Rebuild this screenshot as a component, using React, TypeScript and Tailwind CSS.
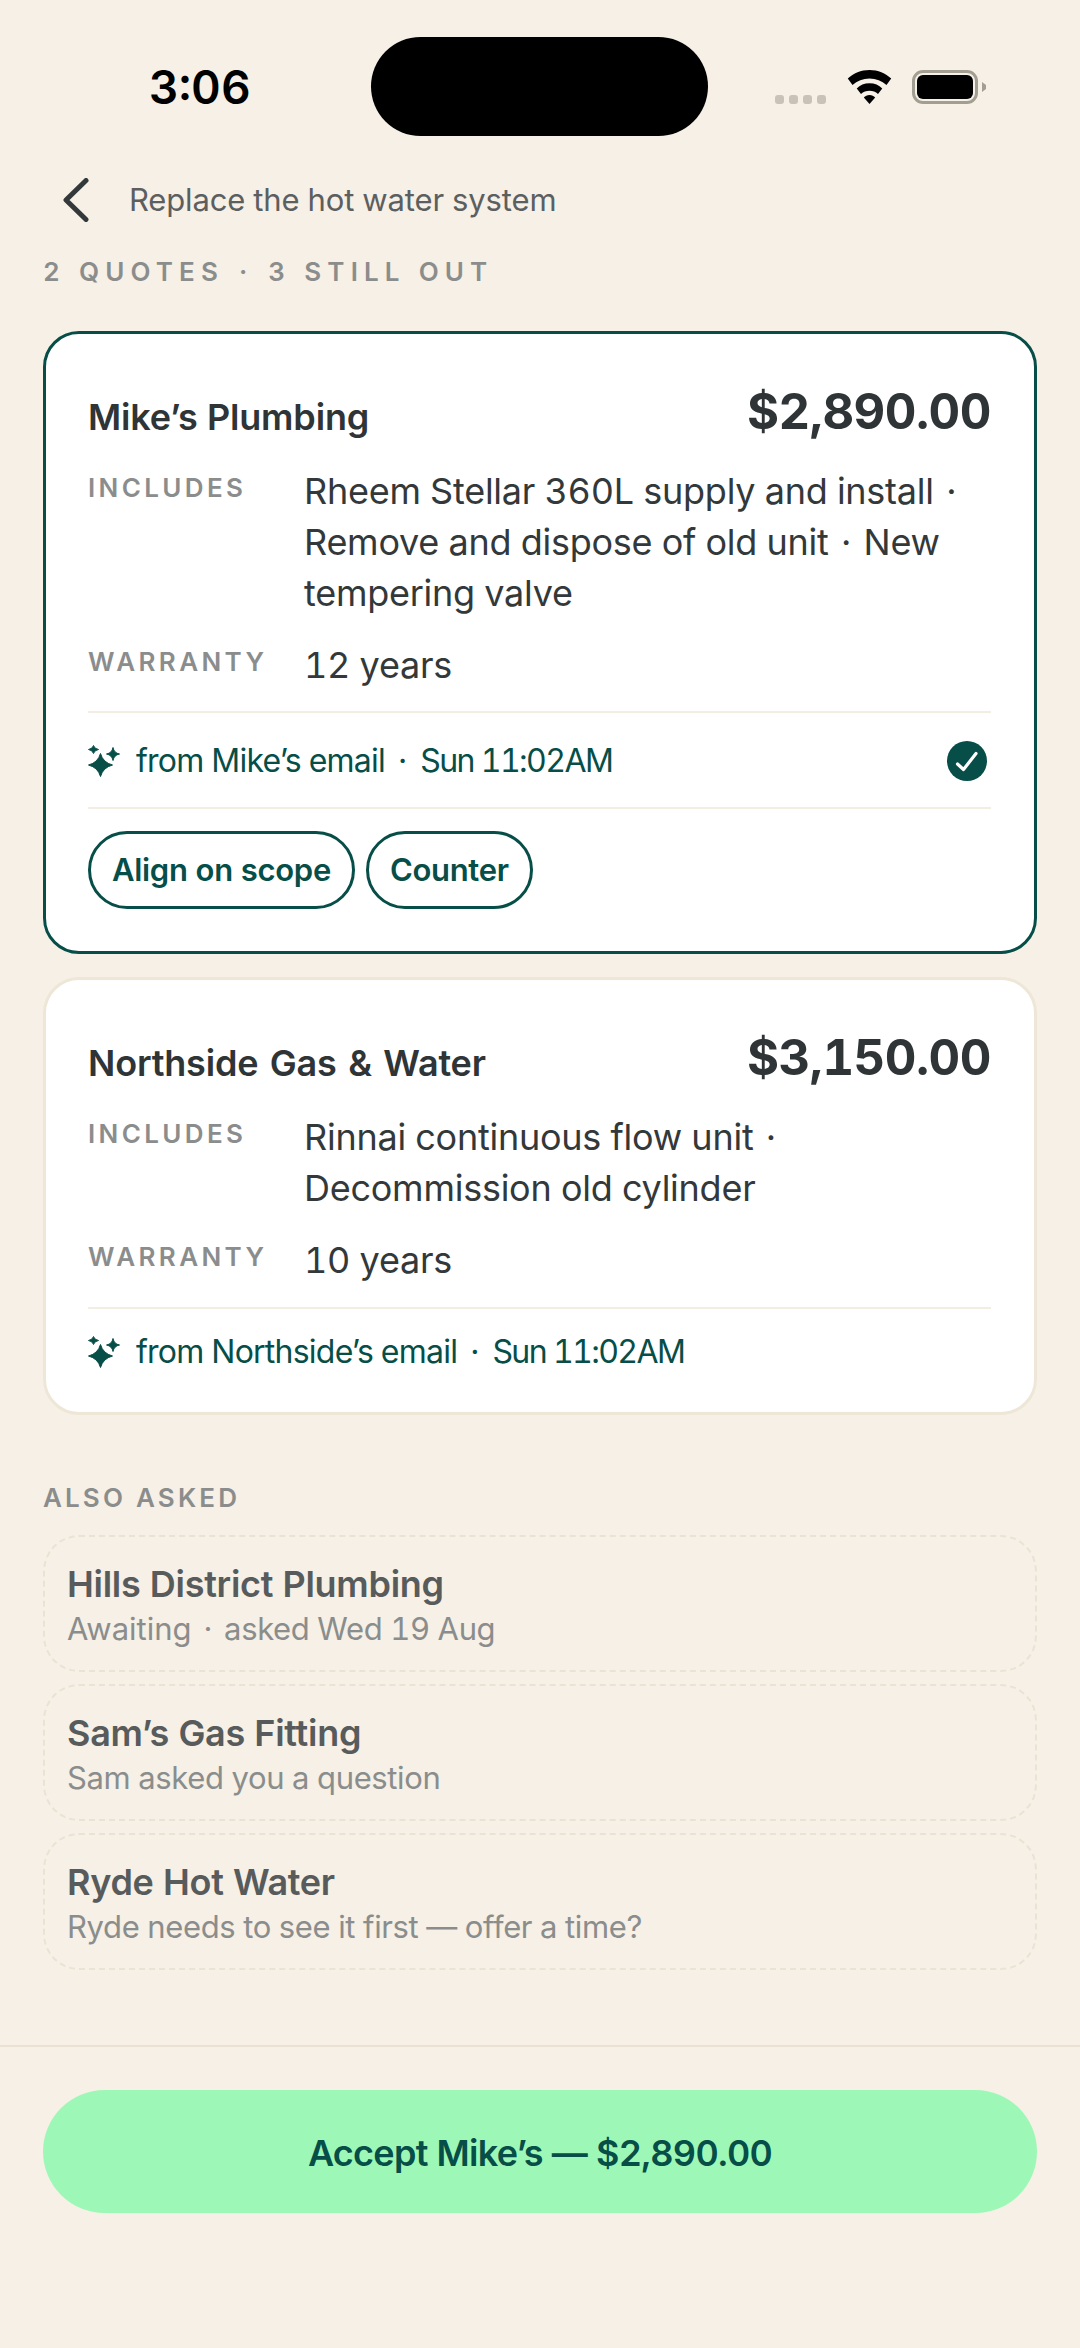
function Sparkle() {
  return (
    <svg width="32" height="32" viewBox="0 0 32 32" className="shrink-0" fill="#064e47" stroke="#064e47" strokeWidth="1" strokeLinejoin="round">
      <path d="M12.500 8.500 Q15 17.500 24.500 20 Q15 22.500 12.500 31.500 Q10 22.500 0.500 20 Q10 17.500 12.500 8.500Z" />
      <path d="M25 2.500 Q26 8 31.500 9 Q26 10 25 15.500 Q24 10 18.500 9 Q24 8 25 2.500Z" />
      <path d="M5.500 0.500 Q6.300 3.700 10.500 4.500 Q6.300 5.300 5.500 8.500 Q4.700 5.300 0.500 4.500 Q4.700 3.700 5.500 0.500Z" />
    </svg>
  );
}

function Detail({ label, children }: { label: string; children: React.ReactNode }) {
  return (
    <div className="flex items-start">
      <div className="w-[216px] shrink-0 pt-[5px] text-[26px] font-semibold tracking-[0.13em] text-[#8b8d8d] leading-[34px]">{label}</div>
      <div className="text-[36px] leading-[51px] text-[#33383a] tracking-[-0.007em]">{children}</div>
    </div>
  );
}

function Source({ from, check, short }: { from: string; check?: boolean; short?: boolean }) {
  return (
    <div className={short ? "flex items-center h-[86px]" : "flex items-center h-[94px] pt-[2px]"}>
      <Sparkle />
      <span className="ml-[16px] text-[32px] text-[#064e47] tracking-[-0.024em]">{from}</span>
      <span className="mx-[13px] text-[32px] text-[#064e47]">·</span>
      <span className="text-[32px] text-[#064e47] tracking-[-0.05em]">Sun 11:02AM</span>
      {check && (
        <svg className="ml-auto mr-[4px]" width="40" height="40" viewBox="0 0 40 40" fill="none">
          <circle cx="20" cy="20" r="20" fill="#064e47" />
          <path d="M10.500 23 16.500 28.500 29 12.500" stroke="#fff" strokeWidth="3.200" strokeLinecap="round" strokeLinejoin="round" />
        </svg>
      )}
    </div>
  );
}

function Other({ name, children }: { name: string; children: React.ReactNode }) {
  return (
    <div className="h-[137px] rounded-[36px] border-2 border-dashed border-[#eae3d4] px-[22px] pt-[24px]">
      <div className="text-[36px] font-semibold leading-[47px] text-[#585b5c] tracking-[-0.008em]">{name}</div>
      <div className="flex text-[31px] leading-[42px] text-[#8a8d8c] tracking-[-0.012em]">{children}</div>
    </div>
  );
}

export default function App() {
  return (
    <div className="w-[1080px] h-[2348px] bg-[#f6f0e6] overflow-hidden font-['Inter',sans-serif] [font-variant-numeric:tabular-nums]">
      <div className="h-[160px] relative">
        <div className="absolute left-[149px] top-[58px] text-[46px] leading-[58px] font-semibold text-black">3:06</div>
        <div className="absolute left-[371px] top-[37px] w-[337px] h-[99px] rounded-[50px] bg-black" />
        <div className="absolute left-[775px] top-[95px] flex gap-[5px]">
          {[0, 1, 2, 3].map((i) => (
            <div key={i} className="w-[9px] h-[9px] rounded-[3px] bg-[#c8c2b8]" />
          ))}
        </div>
        <svg className="absolute left-[847px] top-[70px]" width="45" height="34" viewBox="0 0 46 36" fill="#000">
          <path d="M23 0C14 0 6 3.500 0 9l5 7c5-4.500 11-7 18-7s13 2.500 18 7l5-7C40 3.500 32 0 23 0Z" />
          <path d="M23 14c-5.500 0-10 2-13.500 5.500l4.500 6c2.500-2.500 5.500-3.500 9-3.500s6.500 1 9 3.500l4.500-6C33 16 28.500 14 23 14Z" />
          <path d="M23 26.500c-2.500 0-4.500 1-6 2.500l6 7 6-7c-1.500-1.500-3.500-2.500-6-2.500Z" />
        </svg>
        <div className="absolute left-[912px] top-[70px] w-[66px] h-[34px] rounded-[11px] border-[3px] border-[#a39e92] p-[2px]">
          <div className="w-full h-full rounded-[6px] bg-black" />
        </div>
        <svg className="absolute left-[982px] top-[82px]" width="4" height="10" viewBox="0 0 4 10" fill="#a39e92">
          <path d="M0 0 4 3V7L0 10Z" />
        </svg>
      </div>

      <div className="flex items-center h-[80px] pl-[61px]">
        <svg width="28" height="44" viewBox="0 0 28 44" fill="none" stroke="#33383a" strokeWidth="5" strokeLinecap="round" strokeLinejoin="round">
          <path d="M25 2.500 5 22l20 19.500" />
        </svg>
        <span className="ml-[40px] text-[31px] text-[#5c5f60] tracking-[-0.005em]">Replace the hot water system</span>
      </div>

      <div className="mt-[12px] px-[43px] flex gap-[15px] text-[26px] font-semibold leading-[40px] tracking-[0.235em] text-[#8b8d8d]">
        <span>2 QUOTES</span>
        <span>·</span>
        <span>3 STILL OUT</span>
      </div>

      <div className="mx-[43px] mt-[39px] flex flex-col gap-[23px]">
        <div className="h-[623px] rounded-[36px] border-[3px] border-[#064e47] bg-white pl-[42px] pr-[43px] pt-[46px]">
          <div className="flex justify-between items-center h-[64px]">
            <div className="text-[36px] font-semibold text-[#2f3436] tracking-[-0.005em] mt-[10px]">Mike’s Plumbing</div>
            <div className="text-[49px] font-bold text-[#2f3436] tracking-[-0.01em]">$2,890.00</div>
          </div>
          <div className="mt-[22px] flex flex-col gap-[21px]">
            <Detail label="INCLUDES">{"Rheem Stellar 360L supply and install\u00a0\u200a·\u200a Remove and dispose of old unit\u00a0\u200a·\u200a New tempering valve"}</Detail>
            <Detail label="WARRANTY">12 years</Detail>
          </div>
          <div className="mt-[20px] border-y-2 border-[#f3eee3]">
            <Source from="from Mike’s email" check />
          </div>
          <div className="mt-[22px] flex gap-[11px]">
            <button className="h-[78px] px-[21px] rounded-full border-[3px] border-[#064e47] text-[31px] font-semibold text-[#064e47] tracking-[-0.01em]">Align on scope</button>
            <button className="h-[78px] px-[21px] rounded-full border-[3px] border-[#064e47] text-[31px] font-semibold text-[#064e47] tracking-[-0.01em]">Counter</button>
          </div>
        </div>

        <div className="h-[438px] rounded-[36px] border-[3px] border-[#eee6d7] bg-white pl-[42px] pr-[43px] pt-[46px]">
          <div className="flex justify-between items-center h-[64px]">
            <div className="text-[36px] font-semibold text-[#2f3436] tracking-[-0.005em] [word-spacing:2px] mt-[10px]">Northside Gas &amp; Water</div>
            <div className="text-[49px] font-bold text-[#2f3436] tracking-[-0.01em]">$3,150.00</div>
          </div>
          <div className="mt-[22px] flex flex-col gap-[21px]">
            <Detail label="INCLUDES">{"Rinnai continuous flow unit\u00a0\u200a·"}<br />Decommission old cylinder</Detail>
            <Detail label="WARRANTY">10 years</Detail>
          </div>
          <div className="mt-[21px] border-t-2 border-[#f3eee3]">
            <Source from="from Northside’s email" short />
          </div>
        </div>
      </div>

      <div className="mt-[67px] px-[43px] text-[26px] font-semibold leading-[32px] tracking-[0.12em] text-[#8b8d8d]">ALSO ASKED</div>
      <div className="mx-[43px] mt-[21px] flex flex-col gap-[12px]">
        <Other name="Hills District Plumbing">
          <span className="tracking-[0em]">Awaiting</span>
          <span className="mx-[12px]">·</span>
          <span>asked Wed 19 Aug</span>
        </Other>
        <Other name="Sam’s Gas Fitting"><span>Sam asked you a question</span></Other>
        <Other name="Ryde Hot Water"><span>Ryde needs to see it first — offer a time?</span></Other>
      </div>

      <div className="mt-[75px] border-t-2 border-[#eae3d4] px-[43px] pt-[43px]">
        <button className="w-full h-[123px] pt-[2px] rounded-full bg-[#9df8b7] text-[36px] font-semibold text-[#064e47] tracking-[-0.02em]">Accept Mike’s — $2,890.00</button>
      </div>
    </div>
  );
}
